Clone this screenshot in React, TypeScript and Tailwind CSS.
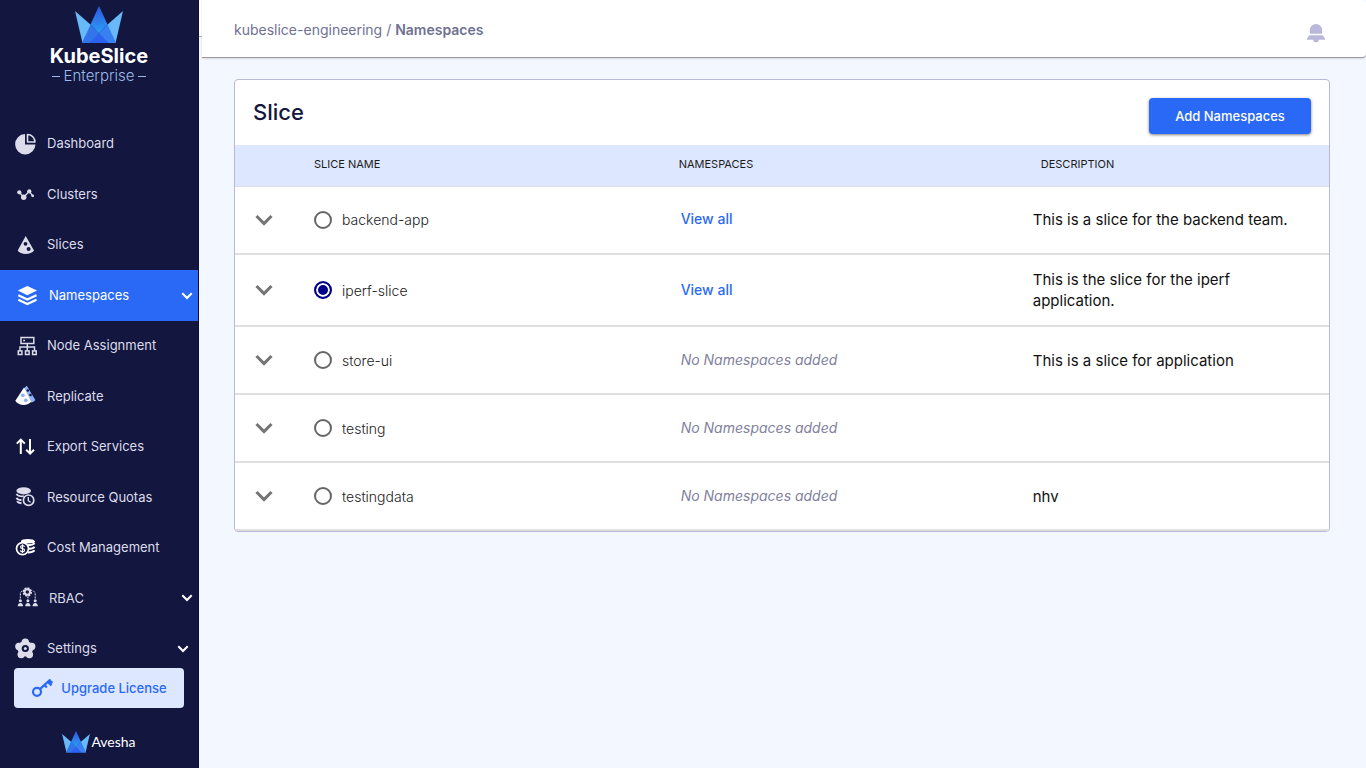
import { useState, type ReactNode } from 'react';
import clsx from 'clsx';

function Crown({ className }: { className: string }) {
  return (
    <svg viewBox="0 0 48 38" className={className} aria-hidden="true">
      <defs>
        <linearGradient id="crown-peak" x1="0" y1="0" x2="0" y2="1">
          <stop offset="0" stopColor="#2f55e0" />
          <stop offset="0.75" stopColor="#2aa0f5" />
          <stop offset="1" stopColor="#2f7df5" />
        </linearGradient>
      </defs>
      <path d="M0 5 16 19 7.5 37z" fill="#68b8fa" />
      <path d="M48 5 32 19l8.500 18z" fill="#68b8fa" />
      <path d="M24 0 41 37H7z" fill="url(#crown-peak)" />
      <path d="M16 19 7 37h8l9-9z" fill="#3474ea" />
      <path d="M32 19 41 37h-8l-9-9z" fill="#3a80f3" />
      <path d="M24 28l9 9H15z" fill="#2b62f2" />
      <path d="M16 19l17 18M32 19 15 37" stroke="#2457c4" strokeWidth="0.6" />
    </svg>
  );
}

function Icon({ children }: { children: ReactNode }) {
  return (
    <svg
      viewBox="0 0 22 22"
      className="h-[22px] w-[22px] shrink-0"
      fill="none"
      aria-hidden="true"
    >
      {children}
    </svg>
  );
}

const icons = {
  dashboard: (
    <Icon>
      <path d="M10 1A10.200 10.200 0 1 0 20.500 11.500H10z" fill="#dcdcea" />
      <path
        d="M12.500 1.500A7.500 7.500 0 0 1 20 9h-7.500z"
        stroke="#dcdcea"
        strokeWidth="1.6"
        strokeLinejoin="round"
      />
    </Icon>
  ),
  clusters: (
    <Icon>
      <path d="M4.300 8.300 8.700 13.300 14.300 7.300 17.700 11.800" stroke="#dcdcea" strokeWidth="1.3" />
      <g fill="#dcdcea">
        <circle cx="4.3" cy="8.3" r="2.1" />
        <circle cx="8.7" cy="13.3" r="2.7" />
        <circle cx="14.3" cy="7.3" r="2.1" />
        <circle cx="17.700" cy="11.8" r="1.400" />
      </g>
    </Icon>
  ),
  slices: (
    <Icon>
      <path d="M10.700 2 2.700 16.500c2.500 4.500 13.500 4.500 16.300 0z" fill="#dcdcea" />
      <circle cx="10.500" cy="9.800" r="1.900" fill="#13163f" />
      <circle cx="13.600" cy="15" r="2" fill="#13163f" />
    </Icon>
  ),
  namespaces: (
    <Icon>
      <path d="M10.300 1 20 5.600l-9.700 4.700L.8 5.600z" fill="#fff" />
      <path d="M1.300 10.200l9 4.400 9.200-4.400M1.300 14.700l9 4.400 9.200-4.400" stroke="#fff" strokeWidth="2.200" />
    </Icon>
  ),
  nodes: (
    <Icon>
      <g stroke="#dcdcea" strokeWidth="1.500">
        <rect x="6" y="2.500" width="12.800" height="6" />
        <path d="M12.300 8.500v7M5 15.500v-3.500h14.500v3.500" />
        <rect x="3.300" y="15.900" width="3.600" height="3.600" />
        <rect x="10.500" y="15.900" width="3.600" height="3.600" />
        <rect x="17.600" y="15.900" width="3.600" height="3.600" />
      </g>
      <path d="M8.200 4.800h1.800v1.500H8.200z" fill="#dcdcea" />
    </Icon>
  ),
  replicate: (
    <Icon>
      <path d="M11.800.8 20.300 15c-1 1.500-2.600 2.200-4.300 2.500L8.800 3.500z" fill="#8fb3f5" />
      <circle cx="12.800" cy="5.500" r="1.300" fill="#13163f" />
      <circle cx="15.500" cy="10" r="1.300" fill="#13163f" />
      <path d="M9 2.500.3 15.800c2.700 5.300 13 5.500 15.900.7z" fill="#fff" />
      <circle cx="7.800" cy="10.300" r="1.900" fill="#8fb3f5" />
      <circle cx="10.800" cy="15.300" r="1.900" fill="#8fb3f5" />
    </Icon>
  ),
  exportServices: (
    <Icon>
      <path
        d="M5.800 18V4M1.800 7.600 5.800 3.600l4 4M15 3v14.500M11.200 13.800l3.900 3.900 3.900-3.900"
        stroke="#fff"
        strokeWidth="2"
      />
    </Icon>
  ),
  quotas: (
    <Icon>
      <ellipse cx="8.700" cy="4.800" rx="7.300" ry="3.600" fill="#dcdcea" />
      <path
        d="M1.500 7.800c1 2 3.600 2.700 7.300 2.500M1.500 11.800c.7 1.400 2.400 2.200 5 2.400M2 15.300c.8 1.200 2.400 1.800 4.500 2"
        stroke="#dcdcea"
        strokeWidth="1.900"
      />
      <circle cx="13.600" cy="14.200" r="5.200" fill="#13163f" stroke="#dcdcea" strokeWidth="1.700" />
      <path d="M13.300 11v3.700l2.300 1.600" stroke="#dcdcea" strokeWidth="1.400" />
    </Icon>
  ),
  cost: (
    <Icon>
      <ellipse cx="12.800" cy="4.200" rx="6.800" ry="2.300" fill="#fff" />
      <path
        d="M12.500 8.200c3.500 0 6-.7 7.100-2M13.500 11.800c3 0 5-.7 6.100-2M13 15.400c3.200 0 5.400-.7 6.600-2M6 5h13.500"
        stroke="#fff"
        strokeWidth="2"
      />
      <circle cx="7.500" cy="11.600" r="6" fill="#13163f" stroke="#fff" strokeWidth="1.700" />
      <path
        d="M9.500 9.800c-.3-1-1-1.300-2-1.300-2.600 0-2.600 2.800 0 3.100 2.800.3 2.700 3.200 0 3.200-1.200 0-1.900-.5-2.200-1.500M7.500 7.300v8.800"
        stroke="#fff"
        strokeWidth="1.200"
      />
    </Icon>
  ),
  rbac: (
    <Icon>
      <circle cx="10.300" cy="5" r="2.700" stroke="#dcdcea" strokeWidth="2" />
      <circle cx="10.300" cy="5" r="4" stroke="#dcdcea" strokeWidth="1.500" strokeDasharray="2 1.100" />
      <path
        d="M3.300 11.500V7c0-2 1-3 3-3M18.200 11.500V7c0-2-1-3-3-3M10.900 9.500v2.500"
        stroke="#dcdcea"
        strokeDasharray="2 1"
      />
      <g fill="#dcdcea">
        <circle cx="3.400" cy="13.700" r="1.500" />
        <circle cx="10.900" cy="13.700" r="1.500" />
        <circle cx="18.200" cy="13.700" r="1.500" />
        <path d="M.7 19.300c0-4.500 5.400-4.500 5.400 0zM8.200 19.300c0-4.500 5.400-4.500 5.400 0zM15.500 19.300c0-4.500 5.400-4.500 5.400 0z" />
      </g>
    </Icon>
  ),
  settings: (
    <Icon>
      <g fill="#dcdcea">
        <circle cx="10.300" cy="10.600" r="7.800" />
        <circle cx="10.300" cy="4.200" r="3.700" />
        <circle cx="16.700" cy="8.500" r="3.700" />
        <circle cx="14.400" cy="16.600" r="3.700" />
        <circle cx="6.200" cy="16.600" r="3.700" />
        <circle cx="3.900" cy="8.500" r="3.700" />
      </g>
      <circle cx="10.300" cy="10.500" r="3.600" fill="#13163f" />
      <circle cx="10.300" cy="10.500" r="1.500" fill="#dcdcea" />
    </Icon>
  ),
};

type NavItem = {
  label: string;
  icon: ReactNode;
  indent?: boolean;
  expandable?: boolean;
  active?: boolean;
};

const navItems: NavItem[] = [
  { label: 'Dashboard', icon: icons.dashboard },
  { label: 'Clusters', icon: icons.clusters },
  { label: 'Slices', icon: icons.slices },
  { label: 'Namespaces', icon: icons.namespaces, indent: true, expandable: true, active: true },
  { label: 'Node Assignment', icon: icons.nodes },
  { label: 'Replicate', icon: icons.replicate },
  { label: 'Export Services', icon: icons.exportServices },
  { label: 'Resource Quotas', icon: icons.quotas },
  { label: 'Cost Management', icon: icons.cost },
  { label: 'RBAC', icon: icons.rbac, indent: true, expandable: true },
  { label: 'Settings', icon: icons.settings, expandable: true },
];

const slices = [
  { name: 'backend-app', hasNamespaces: true, description: 'This is a slice for the backend team.' },
  { name: 'iperf-slice', hasNamespaces: true, description: 'This is the slice for the iperf application.' },
  { name: 'store-ui', hasNamespaces: false, description: 'This is a slice for application' },
  { name: 'testing', hasNamespaces: false, description: '' },
  { name: 'testingdata', hasNamespaces: false, description: 'nhv' },
];

function Sidebar() {
  return (
    <aside className="flex w-[199px] shrink-0 flex-col border-r border-[#0c0e30] bg-[#13163f]">
      <div className="flex h-[119px] shrink-0 flex-col items-center pt-1.5">
        <Crown className="h-[38px] w-12" />
        <div className="text-xl leading-6 font-bold text-white">KubeSlice</div>
        <div className="flex items-center gap-1 text-[15px] leading-4 font-light text-[#9dbbe8]">
          <span className="h-px w-2 bg-[#9dbbe8]" />
          Enterprise
          <span className="h-px w-2 bg-[#9dbbe8]" />
        </div>
      </div>

      <nav className="flex flex-1 flex-col">
        {navItems.map((item) => (
          <a
            key={item.label}
            href="#"
            className={clsx(
              'flex flex-1 items-center gap-2.5 text-[13px]',
              item.indent ? 'pr-[5px] pl-[17px]' : 'pr-[9px] pl-[15px]',
              item.active ? 'bg-[#2a69f6] text-white' : 'text-[#dcdcea]'
            )}
          >
            {item.icon}
            {item.label}
            {item.expandable && (
              <svg viewBox="0 0 12 8" className="ml-auto h-2 w-3" fill="none" aria-hidden="true">
                <path d="M1.300 1.300 6 6l4.700-4.700" stroke="#fff" strokeWidth="2" />
              </svg>
            )}
          </a>
        ))}
      </nav>

      <div className="-mt-1.5 flex h-[100px] shrink-0 flex-col px-3.5">
        <button
          type="button"
          className="flex h-10 items-center justify-center gap-2 rounded bg-[#dde7ff] pt-0.5 text-[13px] font-medium text-[#2a69f6]"
        >
          <svg viewBox="0 0 22 20" className="h-5 w-[22px]" fill="none" aria-hidden="true">
            <circle cx="6" cy="12.800" r="4" stroke="#2a69f6" strokeWidth="2.200" />
            <path d="M8.900 10.200 19.500.5M13.500 6l2.300 2.500M16.800 2.800l3.700 3.500M18 1.800l3.500 2" stroke="#2a69f6" strokeWidth="2.300" />
          </svg>
          Upgrade License
        </button>
        <div className="mt-[22px] flex items-center justify-center gap-px font-['Lato',sans-serif] text-sm leading-6 text-white">
          <Crown className="h-[22px] w-7" />
          Avesha
        </div>
      </div>
    </aside>
  );
}

function TopBar() {
  return (
    <div className="flex shrink-0 items-start">
      <div className="h-[37px] w-[3px] shrink-0 border-b border-[#b0b0b0] bg-white" />
      <header className="flex h-[58px] flex-1 items-center justify-between rounded-r border-b border-[#9a9a9e] bg-white pr-10 pl-8 shadow-[0_1px_2px_rgba(0,0,0,0.12)]">
        <div className="pt-0.5 text-sm leading-5 text-[#6f7192]">
          <a href="#">kubeslice-engineering</a> / <span className="font-semibold">Namespaces</span>
        </div>
        <button type="button" aria-label="Notifications" className="mt-2">
          <svg viewBox="0 0 20 20" className="h-5 w-5" fill="#b9b8da" aria-hidden="true">
            <path d="M3.800 10.800V7.300a6.200 6.400 0 0 1 12.400 0v3.500z" />
            <path d="M3.300 12.200h13.400L19 15.600v1.200h-6.200a2.800 2.500 0 0 1-5.600 0H1v-1.200z" />
          </svg>
        </button>
      </header>
    </div>
  );
}

function SliceTable() {
  const [selected, setSelected] = useState('iperf-slice');

  return (
    <table className="w-full table-fixed text-left">
      <thead>
        <tr className="h-[41px] border-b border-[#dcdde4] bg-[#dde7ff] text-[11px] leading-4 text-[#1c1c1c]">
          <th scope="col" className="w-[79px]" aria-label="Expand" />
          <th scope="col" className="w-1/3 pb-0.5 font-normal">SLICE NAME</th>
          <th scope="col" className="w-[32%] pb-0.5 font-normal">NAMESPACES</th>
          <th scope="col" className="pb-0.5 pl-3 font-normal">DESCRIPTION</th>
        </tr>
      </thead>
      <tbody>
        {slices.map((slice) => (
          <tr key={slice.name} className="h-[68px] border-b-2 border-[#dfdfe0] text-sm leading-[21px]">
            <td className="pl-5">
              <button type="button" aria-label={`Expand ${slice.name}`} className="block">
                <svg viewBox="0 0 18 12" className="h-3 w-[18px]" fill="none" aria-hidden="true">
                  <path d="M1.500 2 9 9.500 16.500 2" stroke="#757575" strokeWidth="3.100" />
                </svg>
              </button>
            </td>
            <td>
              <label className="flex items-center gap-2.5 font-light text-[#222]">
                <input
                  type="radio"
                  name="slice"
                  checked={selected === slice.name}
                  onChange={() => setSelected(slice.name)}
                  className="h-[18px] w-[18px] appearance-none rounded-full border-2 border-[#666] checked:border-[#00008b] checked:bg-[#00008b] checked:shadow-[inset_0_0_0_2px_white]"
                />
                {slice.name}
              </label>
            </td>
            <td className="pb-0.5 pl-0.5">
              {slice.hasNamespaces ? (
                <a href="#" className="font-medium text-[#2a69f6]">View all</a>
              ) : (
                <span className="text-[#80819c] italic">No Namespaces added</span>
              )}
            </td>
            <td className="py-3.5 pr-8 pl-1 text-[15px] text-[#111]">{slice.description}</td>
          </tr>
        ))}
      </tbody>
    </table>
  );
}

export default function App() {
  return (
    <div className="flex min-h-screen bg-[#f3f7ff] font-['Inter',sans-serif]">
      <Sidebar />
      <div className="flex min-w-0 flex-1 flex-col">
        <TopBar />
        <main className="pt-[21px] pr-9 pl-[35px]">
          <section className="overflow-hidden rounded border border-[#b9b8da] bg-white">
            <div className="flex items-start justify-between px-[18px] pt-[18px] pb-[11px]">
              <h1 className="text-[22px] leading-7 font-medium text-[#13163f]">Slice</h1>
              <button
                type="button"
                className="h-9 w-[162px] rounded bg-[#2a69f6] pt-0.5 text-[13px] font-medium text-white shadow-[0_1px_3px_rgba(0,0,0,0.5)]"
              >
                Add Namespaces
              </button>
            </div>
            <SliceTable />
          </section>
        </main>
      </div>
    </div>
  );
}
